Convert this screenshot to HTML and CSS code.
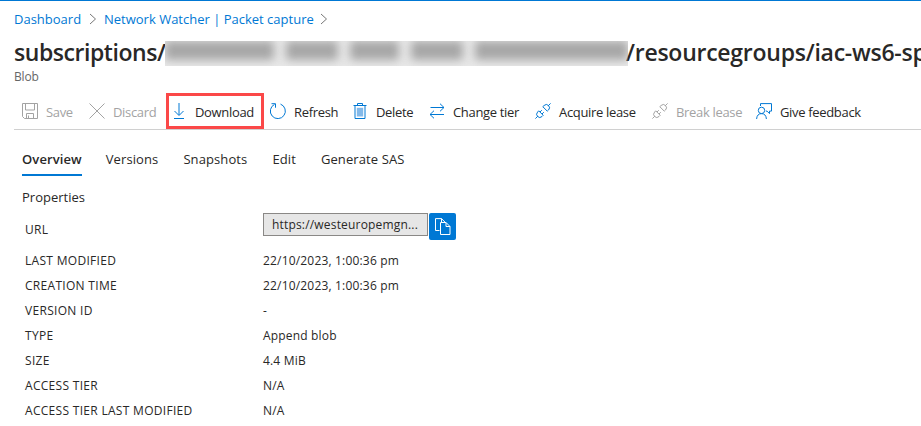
FILE: index.html
```html
<!DOCTYPE html>
<html lang="en">
<head>
<meta charset="utf-8">
<title>Blob</title>
<link rel="stylesheet" href="styles.css">
</head>
<body>
<nav class="crumbs">
  <a class="crumb-home">Dashboard</a>
  <svg class="chev" viewBox="0 0 8 12"><path d="M1 1l5.500 5L1 11"/></svg>
  <a class="crumb-page">Network Watcher | Packet capture</a>
  <svg class="chev" viewBox="0 0 8 12"><path d="M1 1l5.500 5L1 11"/></svg>
</nav>
<header class="head">
  <h1 class="title"><span class="t1">subscriptions/</span><span class="redacted"><i class="g1"></i><i class="g2"></i><i class="g3"></i><i class="g4"></i><i class="g5"></i></span><span class="t2">/resourcegroups/iac-ws6-sp</span></h1>
  <div class="kind">Blob</div>
</header>
<div class="toolbar">
  <div class="cmd off"><svg viewBox="0 0 16 16"><path d="M.5.5h15v15H2.500l-2-2zM3.500.5v6.500h9V.5M4.500 15.500v-5h7v5M6.500 12.500v3"/></svg><span>Save</span></div>
  <div class="cmd off"><svg viewBox="0 0 16 16"><path d="M.5.5l15 15M15.500.5l-15 15"/></svg><span>Discard</span></div>
  <div class="cmd marked"><svg viewBox="0 0 16 16"><path d="M8 0v12M3.500 8L8 12.500 12.500 8M3 15.500h10"/></svg><span>Download</span></div>
  <div class="cmd"><svg viewBox="0 0 16 16"><path d="M10.500 1.100A7.500 7.500 0 1 1 4.500 1.400M1.500.7h4v4"/></svg><span>Refresh</span></div>
  <div class="cmd"><svg viewBox="0 0 16 16"><path d="M1.500 2.500h13M5.500 2.500v-2h5v2M3 2.500v13h10v-13"/><path class="bin" d="M4.800 4.800h6.400v8.700H4.800z"/></svg><span>Delete</span></div>
  <div class="cmd"><svg viewBox="0 0 16 16"><path d="M1.500 4.500H15M11 .7l4 3.800-4 3.800M15 11.500H1M5 7.700l-4 3.800 4 3.800"/></svg><span>Change tier</span></div>
  <div class="cmd"><svg viewBox="0 0 16 16"><path d="M.4 15.600l2.500-2.500M3.700 7.800l4.500 4.500-1.200 1.200a3 3 0 0 1-4.400-4.400zM5 9l1.800-1.800M7 11l1.800-1.800M15.600.4l-2.500 2.500M7.800 3.700l4.500 4.500 1.200-1.200A3 3 0 0 0 9.100 2.500z"/></svg><span>Acquire lease</span></div>
  <div class="cmd off"><svg viewBox="0 0 16 16"><path d="M.4 15.600l2.500-2.500M3.700 7.800l4.500 4.500-1.200 1.200a3 3 0 0 1-4.400-4.400zM5 9l1.800-1.800M7 11l1.800-1.800M15.600.4l-2.500 2.500M7.800 3.700l4.500 4.500 1.200-1.200A3 3 0 0 0 9.100 2.500z"/></svg><span>Break lease</span></div>
  <div class="cmd"><svg viewBox="0 0 16 16"><path d="M4.500 3V.6h11v7.500h-2v2.500l-2.500-2.500h-1.200"/><circle cx="5.500" cy="7.400" r="3.200"/><path d="M.6 16c.2-3.500 2-5.400 4.900-5.400s4.700 1.900 4.900 5.400"/></svg><span>Give feedback</span></div>
</div>
<div class="tabs">
  <div class="tab active">Overview</div>
  <div class="tab">Versions</div>
  <div class="tab">Snapshots</div>
  <div class="tab">Edit</div>
  <div class="tab">Generate SAS</div>
</div>
<h2 class="section">Properties</h2>
<dl class="props">
  <dt class="url-label">URL</dt>
  <dd class="url-row"><div class="url">https://westeuropemgn...</div><div class="copy"><svg viewBox="0 0 16 17"><path d="M4.500 12.500h-4V.6h6l3.500 3.500M6.500.6v3.500"/><path d="M5.500 4.500h5.500l4 4v8H5.500zM11 4.500v4h4"/></svg></div></dd>
  <dt>LAST MODIFIED</dt><dd>22/10/2023, 1:00:36 pm</dd>
  <dt>CREATION TIME</dt><dd>22/10/2023, 1:00:36 pm</dd>
  <dt>VERSION ID</dt><dd>-</dd>
  <dt>TYPE</dt><dd>Append blob</dd>
  <dt>SIZE</dt><dd>4.4 MiB</dd>
  <dt>ACCESS TIER</dt><dd>N/A</dd>
  <dt>ACCESS TIER LAST MODIFIED</dt><dd>N/A</dd>
</dl>
</body>
</html>
```
FILE: styles.css
```css
* { box-sizing: border-box; }
body {
  margin: 0;
  height: 426px;
  overflow: hidden;
  border-top: 1px solid #0078d4;
  background: #fff;
  color: #292827;
  font: 13px/20px "Open Sans", "Noto Sans", sans-serif;
  white-space: nowrap;
}
svg { display: block; fill: none; stroke: currentColor; flex: none; }
.crumbs { display: flex; align-items: center; height: 36px; padding-left: 14px; color: #0078d4; }
.crumb-home { width: 68px; }
.crumb-page { width: 209px; }
.chev { width: 8px; height: 12px; margin: 0 7px; color: #777; }
.head { height: 56px; padding-left: 14px; }
.title { display: flex; align-items: center; height: 32px; margin: 0; font-size: 23px; font-weight: 600; line-height: 30px; }
.title .t1, .title .t2 { height: 32px; }
.t1 { width: 151px; letter-spacing: -0.45px; }
.t2 { margin-left: -2px; letter-spacing: -0.25px; }
.redacted { display: flex; align-items: flex-start; gap: 12px; width: 463px; height: 25px; overflow: hidden; background: #e9e9e9; flex: none; }
.redacted i { height: 19px; background: #a6a6a6; filter: blur(5px); }
.g1 { width: 109px; }
.g2 { width: 52px; }
.g3 { width: 49px; }
.g4 { width: 52px; }
.g5 { flex: 1; }
.kind { font-size: 12px; line-height: 16px; color: #666; letter-spacing: -0.2px; }
.toolbar { display: grid; grid-template-columns: 67px 77px 104px 82px 77px 106px 117px 104px auto; height: 37px; margin-left: 14px; padding-left: 8px; border-bottom: 1px solid #d0d0d0; }
.cmd { display: flex; align-items: center; gap: 8px; height: 36px; color: #0078d4; }
.cmd svg { width: 16px; height: 16px; }
.cmd span { padding-top: 2px; color: #292827; letter-spacing: -0.33px; }
.off, .off span { color: #a3a3a3; }
.marked { width: 98px; padding-left: 2px; border: 3px solid #fb4848; }
.bin { fill: #83b9e9; stroke: none; }
.tabs { display: flex; gap: 25px; margin-left: 22px; padding-top: 15px; height: 47px; letter-spacing: 0.1px; }
.tab { height: 31px; line-height: 28px; }
.active { margin-right: -1px; border-bottom: 2px solid #0078d4; font-weight: 600; }
.section { margin: 10px 0 0 22px; font-size: 13px; font-weight: 400; line-height: 20px; }
.props { display: grid; grid-template-columns: 238px auto; grid-template-rows: 41px; grid-auto-rows: 25px; margin: 0 0 0 25px; line-height: 25px; font-size: 12px; letter-spacing: 0.3px; }
.props dd { margin: 0; letter-spacing: 0.18px; }
.url-label { padding-top: 10px; }
.url-row { display: flex; gap: 1px; padding-top: 6px; }
.url { width: 165px; height: 23px; padding-left: 8px; border: 1px solid #8a8886; background: #e6e6e6; line-height: 21px; }
.copy { display: flex; align-items: center; justify-content: center; width: 27px; height: 27px; border-radius: 2px; background: #0078d4; color: #fff; }
.copy svg { width: 16px; height: 17px; }
```
